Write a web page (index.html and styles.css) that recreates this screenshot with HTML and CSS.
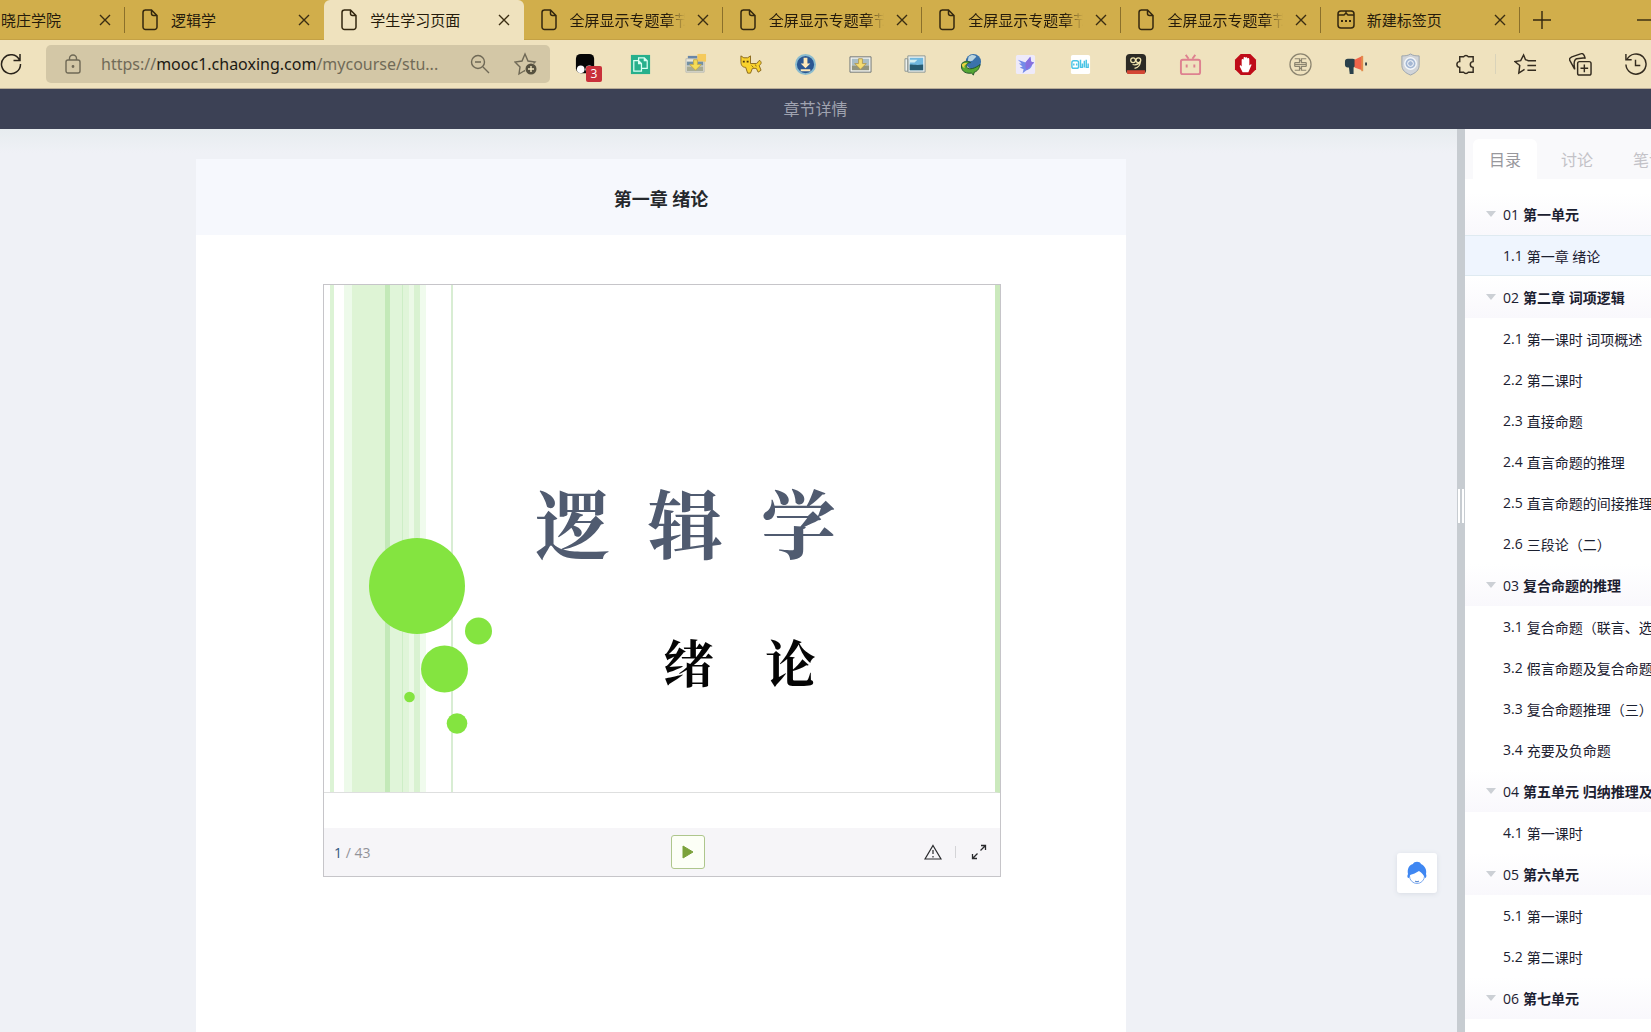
FILE: index.html
```html
<!DOCTYPE html>
<html lang="zh-CN">
<head>
<meta charset="utf-8">
<title>学生学习页面</title>
<link rel="stylesheet" href="styles.css">
</head>
<body>
<svg class="defs" aria-hidden="true">
  <symbol id="file" viewBox="0 0 18 24"><path d="M4 2h6.500L16 7.500V19a2.500 2.500 0 0 1-2.500 2.500h-9A2.500 2.500 0 0 1 2 19V4.500A2.500 2.500 0 0 1 4.500 2zM10.500 2.300V5.500a2 2 0 0 0 2 2H16"/></symbol>
  <symbol id="close" viewBox="0 0 12 12"><path d="M1 1l10 10M11 1L1 11"/></symbol>
</svg>
<div class="app">
  <nav class="tabs" aria-label="标签页">
    <div class="tab tab-cut"><span class="tab-title">晓庄学院</span><button class="close" aria-label="关闭"><svg><use href="#close"/></svg></button></div>
    <div class="tab"><svg class="file"><use href="#file"/></svg><span class="tab-title">逻辑学</span><button class="close" aria-label="关闭"><svg><use href="#close"/></svg></button></div>
    <div class="tab active"><svg class="file"><use href="#file"/></svg><span class="tab-title">学生学习页面</span><button class="close" aria-label="关闭"><svg><use href="#close"/></svg></button></div>
    <div class="tab"><svg class="file"><use href="#file"/></svg><span class="tab-title fade">全屏显示专题章节</span><button class="close" aria-label="关闭"><svg><use href="#close"/></svg></button></div>
    <div class="tab"><svg class="file"><use href="#file"/></svg><span class="tab-title fade">全屏显示专题章节</span><button class="close" aria-label="关闭"><svg><use href="#close"/></svg></button></div>
    <div class="tab"><svg class="file"><use href="#file"/></svg><span class="tab-title fade">全屏显示专题章节</span><button class="close" aria-label="关闭"><svg><use href="#close"/></svg></button></div>
    <div class="tab"><svg class="file"><use href="#file"/></svg><span class="tab-title fade">全屏显示专题章节</span><button class="close" aria-label="关闭"><svg><use href="#close"/></svg></button></div>
    <div class="tab"><svg class="file" viewBox="0 0 18 24"><rect x="1" y="3" width="16" height="17" rx="3"/><path d="M1 7h6l2-2 2 2h6M9 3v2"/><path class="dots" d="M4 13h2M8 13h2M12 13h2"/></svg><span class="tab-title">新建标签页</span><button class="close" aria-label="关闭"><svg><use href="#close"/></svg></button></div>
    <div class="window-tools">
      <button aria-label="新建标签页"><svg width="18" height="18" viewBox="0 0 18 18"><path d="M9 0v18M0 9h18"/></svg></button>
      <button aria-label="最小化"><svg width="14" height="18" viewBox="0 0 14 18"><path d="M0 9h14"/></svg></button>
    </div>
  </nav>

  <div class="toolbar">
    <button class="reload" aria-label="刷新"><svg width="22" height="22" viewBox="0 0 22 22"><path d="M19.500 7A9.500 9.500 0 1 0 20.500 11M20 1v6.500h-6.500"/></svg></button>
    <div class="address">
      <svg class="lock" width="16" height="20" viewBox="0 0 16 20"><rect x="1" y="6" width="14" height="13" rx="2"/><path d="M4.500 6V4.500a3.500 3.500 0 0 1 7 0V6"/><circle cx="8" cy="12.500" r=".7"/></svg>
      <a class="url" href="#">https://<b>mooc1.chaoxing.com</b>/mycourse/stu...</a>
      <button aria-label="缩小"><svg width="20" height="20" viewBox="0 0 20 20"><circle cx="8" cy="8" r="6.500"/><path d="M5 8h6M13 13l6 6"/></svg></button>
      <button aria-label="收藏"><svg width="24" height="24" viewBox="0 0 24 24"><path d="M10 19l-5 3 1-7-5-5 7-1 3-7 3 7 7 1-1.500 1.500M10 19l1-.5"/><circle cx="17" cy="17" r="5.500" fill="#56513f" stroke="none"/><path d="M14 17h6M17 14v6" stroke="#f0e3bd"/></svg></button>
    </div>
    <div class="extensions">
      <button class="ext" aria-label="扩展"><svg viewBox="0 0 24 24"><rect x="2" y="1" width="19" height="20" rx="5" fill="#050505"/><circle cx="7" cy="17" r="4" fill="#fff"/><circle cx="16" cy="17" r="4" fill="#fff"/></svg><span class="badge">3</span></button>
      <button class="ext" aria-label="复制"><svg viewBox="0 0 24 24"><path fill="#27b08c" d="M2 2h20v20H2z"/><path d="M5 8h5l3 3v8H5zM10 8v3h3M10 8V5h6l3 3v8h-6M16 5v3h3" stroke="#d9fff3" stroke-width="1.300"/></svg></button>
      <button class="ext" aria-label="批量下载"><svg viewBox="0 0 24 24"><path fill="#6886a8" d="M4 3h10v4H4z"/><path fill="#e9e7dd" stroke="#b9bbb4" d="M2 6h19v14H2z"/><path fill="#f5ca5c" d="M14 1h9v8h-9z"/><path fill="#7390a3" d="M3 9h17v4H3z"/><path fill="#a7aa93" d="M3 14h17v5H3z"/><path fill="#f6dd57" stroke="#c7ae49" d="M10 7h4v5h4l-6 6-6-6h4z"/></svg></button>
      <button class="ext" aria-label="小猫"><svg viewBox="0 0 24 24"><path fill="#f9d22c" stroke="#8a681e" d="M2 3l3 2h4l3-2v8h6c2 0 2-4 4-3 2 2 1 4-1 5l2 5-3 2-2-4h-4l-2 5h-3l-2-6c-4 0-5-3-5-6z"/><path fill="#4f370d" d="M4 8h2v2H4zM8 8h2v2H8z"/><path d="M13 13l2 2M17 12l1 2" stroke="#8a681e"/></svg></button>
      <button class="ext" aria-label="下载"><svg viewBox="0 0 24 24"><circle cx="12" cy="12" r="10" fill="#2b5792" stroke="#8bbccf" stroke-width="2"/><path fill="#ffe9b8" d="M10 5h4v6h3l-5 5-5-5h3zM7 17h10v2H7z"/></svg></button>
      <button class="ext" aria-label="图片下载"><svg viewBox="0 0 24 24"><path fill="#f2f2ed" stroke="#6f7475" d="M1 4h22v16H1z"/><path fill="#a9bdc5" d="M3 6h18v7H3z"/><path fill="#92957f" d="M3 13h18v5H3z"/><path fill="#f6dd71" stroke="#b29d59" d="M10 6h4v5h4l-6 6-6-6h4z"/></svg></button>
      <button class="ext" aria-label="图片"><svg viewBox="0 0 24 24"><path fill="#eef1ed" stroke="#8c9693" d="M1 6h3v13H1zM4 3h18v17H4z"/><path fill="#71b8df" d="M6 5h14v13H6z"/><path fill="#285b72" d="M6 12c4 0 7 1 14 0v6H6z"/><path fill="#d5eff3" d="M6 7h8l-3 3H6z"/></svg></button>
      <button class="ext" aria-label="下载管理器"><svg viewBox="0 0 24 24"><circle cx="15" cy="9" r="8" fill="#3a72aa"/><path fill="#bbd5df" d="M10 4c3-3 7-2 8 0l-4 4-5 1z"/><path fill="#55a733" stroke="#22532b" d="M3 11c3-3 7-3 9-1-3 0-5 2-4 5 3 3 9 1 14-3-1 5-3 7-6 8l-1 3-2-2C6 22 1 18 3 11z"/><path fill="#ecd242" d="M3 12c2-2 5-2 6-1-3 1-4 3-3 5-2-1-3-2-3-4z"/></svg></button>
      <button class="ext" aria-label="飞鸟"><svg viewBox="0 0 24 24"><rect x="2" y="2" width="20" height="20" rx="2" fill="#eeeafa"/><path fill="#748be8" d="M4 7l8 3 5-6 1 5 3 1-2 2c-1 4-3 5-6 6l-4 3 1-4-4-2 3-1-4-3h3z"/><path fill="#8970de" d="M12 10l5-6 1 5 3 1-2 2-6 6-1-3z"/></svg></button>
      <button class="ext" aria-label="哔哩"><svg viewBox="0 0 24 24"><rect x="2" y="2" width="20" height="20" rx="2" fill="#fff"/><g stroke="#4ac4e5" stroke-width="1.500"><rect x="3" y="8" width="7" height="8" rx="2"/><path d="M5 11v2M8 11v2M12 7v8h2v-4M16 8v7M18 7v8h2v-4"/></g></svg></button>
      <button class="ext" aria-label="脚本"><svg viewBox="0 0 24 24"><rect x="2" y="1" width="21" height="21" rx="4" fill="#2c2a25"/><g stroke="#f2e6b0" stroke-width="1.300"><circle cx="9.500" cy="7.500" r="2.500"/><circle cx="15" cy="7.500" r="2.500"/><path d="M9 12c3 1 6 0 8-3 0 4-2 6-6 7"/></g><path fill="#d44634" d="M3 18h19v2a2 2 0 0 1-2 2H5a2 2 0 0 1-2-2z"/></svg></button>
      <button class="ext" aria-label="电视"><svg viewBox="0 0 24 24"><g stroke="#de8190" stroke-width="2"><rect x="2" y="7" width="20" height="15" rx="2"/><path d="M7 2l3 4M17 2l-3 4M8 12v3M16 12v3"/></g></svg></button>
      <button class="ext" aria-label="广告拦截"><svg viewBox="0 0 24 24"><path fill="#bf0b18" d="M7 1h10l6 6v10l-6 6H7l-6-6V7z"/><path fill="#fff" d="M8 7c0-1 2-1 2 0V5c0-1 2-1 2 0 0-1 2-1 2 1 0-1 2-1 2 1v6l1-1c1 0 2 0 1 1l-3 7H9l-3-6c0-2 1-1 2 0z"/></svg></button>
      <button class="ext" aria-label="快捷键"><svg viewBox="0 0 24 24"><g stroke="#8c8570" stroke-width="1.300"><circle cx="12" cy="12" r="11"/><path d="M6 6h5v4H6M18 6h-5v4h5M6 12h12M6 14h5v4H6M18 14h-5v4h5M11 8h2M11 16h2M6 10v4M18 10v4"/></g></svg></button>
      <button class="ext" aria-label="扩音器"><svg viewBox="0 0 24 24"><rect x="1" y="6" width="11" height="9" rx="3" fill="#29404b"/><path fill="#29404b" d="M5 14h5v8H6z"/><path fill="#f0644a" d="M11 7l8-4v15l-8-3z"/><path fill="#e28c4c" d="M18 3h2v16h-2z"/><path fill="#384147" d="M22 10h2v3h-2z"/></svg></button>
      <button class="ext" aria-label="盾牌"><svg viewBox="0 0 24 24"><path fill="#d1d4d8" stroke="#9aa3ae" d="M12 1c3 2 6 2 9 2v10c0 5-4 8-9 10-5-2-9-5-9-10V3c3 0 6 0 9-2z"/><circle cx="12" cy="11" r="6" fill="#a4b7d3" stroke="#f4f7fa" stroke-width="1.500"/><circle cx="12" cy="11" r="3" stroke="#fff"/></svg></button>
      <button class="ext" aria-label="扩展管理"><svg viewBox="0 0 24 24"><path stroke-width="1.500" d="M6 4h4a3 3 0 0 1 5 0h5v5a3 3 0 0 0 0 6v5h-5a3 3 0 0 1-5 0H6v-5a3 3 0 1 1 0-6z"/></svg></button>
      <span class="divider"></span>
      <button class="ext" aria-label="收藏夹"><svg viewBox="0 0 24 24"><path stroke-width="1.500" d="M15 8l-3-1-2-5-3 6-6 1 5 4-1 8 6-4M14 8h9M14 13h9M14 18h9"/></svg></button>
      <button class="ext" aria-label="集锦"><svg viewBox="0 0 24 24"><g stroke-width="1.500"><rect x="9" y="9" width="14" height="14" rx="2"/><path d="M16 12v8M12 16h8M6 17L1 8c-1-2 0-3 2-4l9-3c2-1 3 0 4 2l1 3M6 17c-1-5-1-10 2-11l9-1"/></g></svg></button>
      <button class="ext" aria-label="历史记录"><svg viewBox="0 0 24 24"><path stroke-width="1.500" d="M3 7a10.500 10.500 0 1 1-1 5M2 1v6h6M12 7v6h5"/></svg></button>
    </div>
  </div>

  <header class="page-bar">章节详情</header>

  <div class="workspace">
    <main class="content">
      <article class="card">
        <h1 class="card-title">第一章 绪论</h1>
        <div class="card-body">
          <section class="viewer">
            <div class="slide">
              <svg class="art" viewBox="0 0 676 507" preserveAspectRatio="xMinYMin slice" aria-hidden="true">
                <path fill="#dcf3d5" d="M6 0h4v507H6z"/>
                <path fill="#edfaea" d="M20 0h8v507h-8z"/>
                <path fill="#def4d5" d="M28 0h33v507H28z"/>
                <path fill="#c3e9b8" d="M61 0h5v507h-5z"/>
                <path fill="#e0f5d9" d="M66 0h19v507H66z"/>
                <path fill="#cdeec6" d="M78 0h1v507h-1z"/>
                <path fill="#ecf9e7" d="M85 0h5v507h-5z"/>
                <path fill="#d9f2d1" d="M90 0h6v507h-6z"/>
                <path fill="#f0fbed" d="M96 0h6v507h-6z"/>
                <path fill="#d8edd3" d="M127 0h2v507h-2z"/>
                <g fill="#84e440"><circle cx="93" cy="301" r="48"/><circle cx="154.500" cy="346" r="13.500"/><circle cx="120.500" cy="384" r="23.500"/><circle cx="85.500" cy="412" r="5.300"/><circle cx="133" cy="438.500" r="10.300"/></g>
              </svg>
              <p class="slide-title"><span>逻</span><span>辑</span><span>学</span></p>
              <p class="slide-subtitle"><span>绪</span><span>论</span></p>
            </div>
            <div class="viewer-gap"></div>
            <div class="controls">
              <span class="pages"><b>1</b> / 43</span>
              <button class="play" aria-label="播放"><svg width="12" height="14" viewBox="0 0 12 14"><path fill="#7ba23a" d="M1 1l10 6-10 6z" stroke="#7ba23a" stroke-linejoin="round"/></svg></button>
              <div class="actions">
                <button aria-label="反馈"><svg width="18" height="16" viewBox="0 0 18 16"><path d="M9 1.500L17 15H1zM9 6v4M9 12v1.500"/></svg></button>
                <span class="rule"></span>
                <button aria-label="全屏"><svg width="16" height="16" viewBox="0 0 16 16"><path stroke-width="1.300" d="M9.500 6.500l5-5M10 1.500h4.500V6M6.500 9.500l-5 5M1.500 10v4.500H6"/></svg></button>
              </div>
            </div>
          </section>
        </div>
      </article>
      <button class="assistant" aria-label="智能助手"><svg width="22" height="24" viewBox="0 0 22 24"><circle cx="11" cy="15" r="7.500" fill="#fff" stroke="#7eabf0"/><path fill="#3f87f2" d="M7 3c1-3 7-3 8 0 4 2 6 6 5 10 1 2 0 4-1 4-1-3-3-5-6-7-3 2-6 3-9 4l-1 3c-2 0-2-2-1-4C1 8 3 4 7 3z"/><path d="M9 20c1 1 3 1 4 0" stroke="#3f77ca"/></svg></button>
    </main>
    <div class="splitter" role="separator"><span></span><span></span></div>
    <aside class="sidebar">
      <div class="side-tabs"><button class="selected">目录</button><button>讨论</button><button>笔记</button></div>
      <ul class="toc">
        <li class="chapter"><a href="#"><i>01</i><span>第一单元</span></a></li>
        <li class="current"><a href="#"><i>1.1</i><span>第一章 绪论</span></a></li>
        <li class="chapter"><a href="#"><i>02</i><span>第二章 词项逻辑</span></a></li>
        <li><a href="#"><i>2.1</i><span>第一课时 词项概述</span></a></li>
        <li><a href="#"><i>2.2</i><span>第二课时</span></a></li>
        <li><a href="#"><i>2.3</i><span>直接命题</span></a></li>
        <li><a href="#"><i>2.4</i><span>直言命题的推理</span></a></li>
        <li><a href="#"><i>2.5</i><span>直言命题的间接推理</span></a></li>
        <li><a href="#"><i>2.6</i><span>三段论（二）</span></a></li>
        <li class="chapter"><a href="#"><i>03</i><span>复合命题的推理</span></a></li>
        <li><a href="#"><i>3.1</i><span>复合命题（联言、选</span></a></li>
        <li><a href="#"><i>3.2</i><span>假言命题及复合命题</span></a></li>
        <li><a href="#"><i>3.3</i><span>复合命题推理（三）</span></a></li>
        <li><a href="#"><i>3.4</i><span>充要及负命题</span></a></li>
        <li class="chapter"><a href="#"><i>04</i><span>第五单元 归纳推理及</span></a></li>
        <li><a href="#"><i>4.1</i><span>第一课时</span></a></li>
        <li class="chapter"><a href="#"><i>05</i><span>第六单元</span></a></li>
        <li><a href="#"><i>5.1</i><span>第一课时</span></a></li>
        <li><a href="#"><i>5.2</i><span>第二课时</span></a></li>
        <li class="chapter"><a href="#"><i>06</i><span>第七单元</span></a></li>
      </ul>
    </aside>
  </div>
</div>
</body>
</html>
```
FILE: styles.css
```css
* { box-sizing: border-box; }

body {
  margin: 0;
  overflow: hidden;
  font-family: "Open Sans", "Noto Sans CJK SC", sans-serif;
  font-size: 14px;
  color: #1b2030;
}

button {
  display: flex;
  align-items: center;
  justify-content: center;
  padding: 0;
  border: 0;
  background: none;
  font: inherit;
  color: inherit;
}

a { color: inherit; text-decoration: none; }
p, ul { margin: 0; padding: 0; }
svg { flex: none; fill: none; stroke: none; }
.defs { display: none; }

.app {
  display: flex;
  flex-direction: column;
  height: 100vh;
}

/* Browser tabs */
.tabs {
  display: grid;
  grid-template-columns: 125px repeat(7, minmax(0, 1fr)) 131px;
  flex: none;
  height: 40px;
  background: #d1ae4b;
  box-shadow: inset 0 -1px #c4a145;
  color: #251b0b;
}

.tab {
  display: flex;
  align-items: center;
  min-width: 0;
  padding: 0 14px 0 16px;
  background: linear-gradient(#8b702b, #8b702b) right center / 1px 26px no-repeat;
}

.tab-cut { padding-left: 1px; }
.tab.active { background: #efe2be; border-radius: 6px 6px 0 0; }
.tab:has(+ .active) { background: none; }

.tab-title {
  flex: 1;
  min-width: 0;
  overflow: hidden;
  white-space: nowrap;
  font-family: "Noto Sans CJK SC", sans-serif;
  font-size: 15px;
  line-height: 24px;
}

.fade { mask-image: linear-gradient(to right, #000 84%, transparent); }

.file {
  width: 18px;
  height: 24px;
  margin-right: 12px;
  stroke: #33270f;
  stroke-width: 1.5;
}

.dots { stroke-width: 2; }

.close { width: 12px; height: 24px; margin-left: 12px; }
.close svg { width: 12px; height: 12px; stroke: #3a2d12; stroke-width: 1.4; }

.window-tools {
  display: flex;
  justify-content: space-between;
  padding-left: 13px;
}

.window-tools svg { stroke: #33270f; stroke-width: 1.4; }

/* Address bar */
.toolbar {
  display: flex;
  align-items: center;
  flex: none;
  height: 49px;
  border-bottom: 1px solid #b8ad98;
  background: #efe2be;
}

.reload { width: 22px; margin-right: 24px; }
.reload svg { stroke: #29231a; stroke-width: 1.5; }

.address {
  display: flex;
  align-items: center;
  flex: 1;
  min-width: 0;
  height: 38px;
  padding: 0 12px 0 19px;
  border-radius: 5px;
  background: #d3c7a6;
}

.address svg { stroke: #6f6956; stroke-width: 1.4; }
.address button + button { margin-left: 24px; }

.url {
  flex: 1;
  min-width: 0;
  margin-left: 20px;
  overflow: hidden;
  white-space: nowrap;
  font-family: "Noto Sans", "Open Sans", sans-serif;
  font-size: 16px;
  line-height: 24px;
  color: #716b58;
}

.url b { font-weight: 400; color: #1d1a13; }

/* The last button runs past the window edge */
.extensions { display: flex; align-items: center; flex: none; margin: 0 -12px 0 8px; }
.ext { position: relative; width: 55px; height: 40px; }
.ext svg { width: 23px; height: 23px; stroke: #332b1f; }
.ext svg [fill]:not([stroke]) { stroke: none; }

.badge {
  position: absolute;
  right: 11px;
  bottom: 2px;
  width: 16px;
  height: 16px;
  border-radius: 2px;
  background: #c9303a;
  color: #fff;
  font-size: 12px;
  line-height: 16px;
}

.divider { width: 1px; height: 20px; margin: 0 2px; background: #d9d3ba; }

/* Course header */
.page-bar {
  flex: none;
  height: 40px;
  padding-right: 20px;
  background: #3c4155;
  color: #a0a3b0;
  font-size: 16px;
  line-height: 40px;
  text-align: center;
}

.workspace { display: flex; flex: 1; min-height: 0; }

.content {
  position: relative;
  flex: 1;
  min-width: 0;
  padding: 30px 331px 0 196px;
  background: linear-gradient(#e7ecef, #eff1f6 24px);
}

.card { height: 100%; background: #fff; }

.card-title {
  margin: 0;
  padding-top: 4px;
  background: #f6f8fd;
  color: #25282c;
  font-size: 18px;
  line-height: 72px;
  text-align: center;
}

.card-body { padding: 49px 125px 0 127px; }

.viewer { border: 1px solid #c6c5c9; }

.slide {
  position: relative;
  height: 508px;
  padding: 198px 0 0 211px;
  border-right: 5px solid #cbe9bd;
  border-bottom: 1px solid #dedfdf;
}

.art { position: absolute; inset: 0; width: 100%; height: 100%; }

.slide-title, .slide-subtitle {
  position: relative;
  display: flex;
  font-family: "Noto Serif CJK SC", "Noto Sans CJK SC", serif;
  font-weight: 700;
}

.slide-title {
  gap: 38px;
  color: #505b70;
  font-size: 75px;
  line-height: 76px;
}

.slide-subtitle {
  gap: 51px;
  margin: 76px 0 0 128px;
  color: #050505;
  font-size: 51px;
  line-height: 52px;
}

.viewer-gap { height: 35px; }

.controls {
  display: grid;
  grid-template-columns: 1fr auto 1fr;
  align-items: center;
  height: 48px;
  padding: 0 13px 0 10px;
  background: #f6f5f8;
}

.pages { color: #929298; }
.pages b { color: #31577f; font-weight: 400; }

.play {
  width: 34px;
  height: 34px;
  margin-left: 54px;
  border: 1px solid #aec68c;
  border-radius: 3px;
  background: #fcfff6;
}

.actions { display: flex; align-items: center; justify-content: flex-end; }
.actions svg { stroke: #292a2d; stroke-width: 1.2; }
.rule { width: 1px; height: 12px; margin: 0 15px 0 13px; background: #d4d4d7; }

.assistant {
  position: absolute;
  top: 724px;
  right: 20px;
  width: 40px;
  height: 40px;
  border-radius: 3px;
  background: #fff;
  box-shadow: 0 1px 5px #d8dce4;
}

.splitter {
  display: flex;
  align-items: center;
  justify-content: center;
  gap: 2px;
  flex: none;
  width: 8px;
  padding-bottom: 150px;
  background: #c7ccd1;
}

.splitter span { width: 2px; height: 34px; background: #fff; }

/* Table of contents */
.sidebar { flex: none; width: 186px; overflow: hidden; background: #fff; }

.side-tabs {
  display: flex;
  height: 50px;
  padding: 10px 0 0 8px;
  background: #f9f9fb;
}

.side-tabs button {
  flex: none;
  width: 64px;
  margin-right: 8px;
  border-radius: 6px 6px 0 0;
  color: #c3c2c7;
  font-size: 16px;
}

.side-tabs .selected { background: #fff; color: #98989d; }

.toc { padding-top: 14px; list-style: none; }

.toc a {
  position: relative;
  display: flex;
  align-items: center;
  gap: 4px;
  height: 41px;
  padding-left: 38px;
  white-space: nowrap;
}

.toc i { font-style: normal; }
.toc span { flex: none; }

.chapter a {
  height: 42px;
  background: linear-gradient(#fff, #f9f8fc);
}

.chapter span { font-weight: 700; }

.chapter a::before {
  content: "";
  position: absolute;
  left: 21px;
  border: 5px solid transparent;
  border-top: 6px solid #ccd0d5;
  border-bottom: 0;
}

.current a {
  border-top: 1px solid #dfeaf1;
  border-bottom: 1px solid #dfeaf1;
  background: #eff5fe;
}
```
